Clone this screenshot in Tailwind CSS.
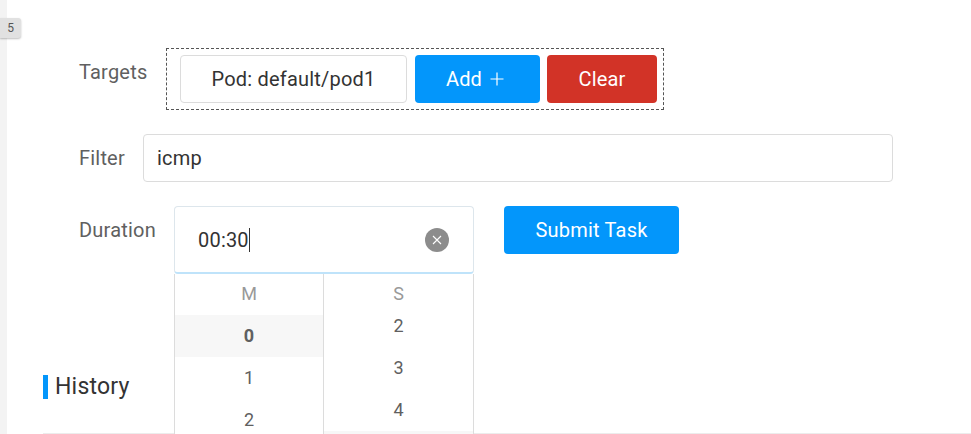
<!DOCTYPE html>
<html lang="en">
<head>
    <meta charset="UTF-8">
    <title>Task</title>
    <script src="https://cdn.jsdelivr.net/npm/@tailwindcss/browser@4"></script>
</head>
<body class="bg-white overflow-hidden font-['Roboto',sans-serif]">
    <div class="relative flex h-[434px] w-[971px] overflow-hidden">
        <div class="w-[7px] shrink-0 bg-[#f3f3f3]"></div>
        <div class="absolute left-0 top-[18px] flex h-[20px] w-[21px] items-center justify-center rounded-r-[3px] bg-[#e1e1e1] text-[12px] text-[#555] shadow-[0_1px_2px_rgba(0,0,0,0.25)]">5</div>

        <main class="flex-1 pt-[48px] text-[20px] tracking-[0.2px]">
            <!-- targets -->
            <div class="flex items-start pl-[72px]">
                <label class="w-[87px] pt-[10px] leading-[28px] text-[#606060]">Targets</label>
                <div class="flex h-[62px] w-[498px] items-center border border-dashed border-[#555] pl-[13px]">
                    <div class="flex h-[48px] w-[227px] items-center justify-center rounded-[4px] border border-[#dcdcdc] text-[#333]">Pod: default/pod1</div>
                    <button class="ml-[8px] flex h-[48px] w-[125px] items-center justify-center gap-[8px] rounded-[4px] bg-[#0396fb] pr-[5px] text-white">
                        Add
                        <svg width="14" height="14" viewBox="0 0 14 14" fill="none" stroke="white" stroke-width="1.2"><path d="M7 0.5V13.5M0.5 7H13.5"/></svg>
                    </button>
                    <button class="ml-[7px] h-[48px] w-[110px] rounded-[4px] bg-[#d23327] text-white">Clear</button>
                </div>
            </div>

            <!-- filter -->
            <div class="mt-[24px] flex items-center pl-[72px]">
                <label class="w-[64px] text-[#606060]">Filter</label>
                <div class="flex h-[48px] w-[750px] items-center rounded-[4px] border border-[#dcdcdc] pl-[13px] text-[#333]">icmp</div>
            </div>

            <!-- duration -->
            <div class="mt-[24px] flex items-start pl-[72px]">
                <label class="w-[95px] pt-[10px] leading-[28px] text-[#606060]">Duration</label>
                <div class="flex h-[68px] w-[300px] items-center rounded-[4px] border border-[#dde6ec] border-b-2 border-b-[#bfe3fa] pl-[23px] pr-[24px] text-[#333]">
                    <span>00:30</span>
                    <span class="h-[24px] w-px bg-[#333]"></span>
                    <span class="ml-auto flex h-[24px] w-[24px] items-center justify-center rounded-full bg-[#8c8c8c]">
                        <svg width="10" height="10" viewBox="0 0 10 10" fill="none" stroke="white" stroke-width="1.1"><path d="M1 1L9 9M9 1L1 9"/></svg>
                    </span>
                </div>
                <button class="ml-[30px] h-[48px] w-[175px] rounded-[4px] bg-[#0396fb] text-white">Submit Task</button>
            </div>

            <!-- history -->
            <div class="ml-[36px] mt-[100px] flex h-[60px] items-start border-b border-[#ececec]">
                <div class="flex items-center gap-[7px]">
                    <span class="h-[24px] w-[5px] bg-[#0396fb]"></span>
                    <h2 class="pt-[1px] text-[23px] leading-[24px] tracking-[0.2px] text-[#333]">History</h2>
                </div>
            </div>
        </main>

        <!-- time picker menu -->
        <div class="absolute left-[174px] top-[274px] flex h-[160px] w-[300px] overflow-hidden border-x border-[#dcdcdc] bg-white text-center text-[18px] text-[#606060]">
            <div class="w-[149px] shrink-0 border-r border-[#dcdcdc]">
                <div class="h-[41px] pt-[6px] text-[#999]">M</div>
                <div class="flex h-[42px] items-center justify-center bg-[#f7f7f7] pb-[2px] font-bold">0</div>
                <div class="flex h-[42px] items-center justify-center pb-[2px]">1</div>
                <div class="flex h-[42px] items-center justify-center pb-[2px]">2</div>
            </div>
            <div class="flex-1">
                <div class="h-[31px] pt-[6px] text-[#999]">S</div>
                <div class="flex h-[42px] items-center justify-center pb-[2px]">2</div>
                <div class="flex h-[42px] items-center justify-center pb-[2px]">3</div>
                <div class="flex h-[42px] items-center justify-center pb-[2px]">4</div>
                <div class="h-[42px] bg-[#f7f7f7]"></div>
            </div>
        </div>
    </div>
</body>
</html>
